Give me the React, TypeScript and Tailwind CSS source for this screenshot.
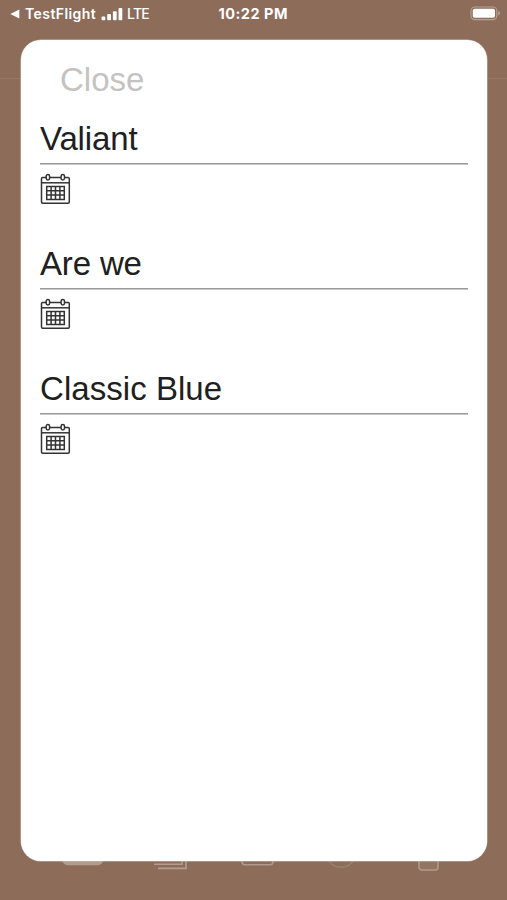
import React from 'react';

const entries = [
  { name: 'Valiant', tracking: 'tracking-[-0.15px]' },
  { name: 'Are we', tracking: 'tracking-[-0.15px]' },
  { name: 'Classic Blue', tracking: 'tracking-[0.05px]' },
];

function CalendarIcon() {
  return (
    <svg className="block h-8 w-8" viewBox="0 0 32 32" fill="none" stroke="#333333" strokeWidth="1.5">
      <rect x="1.5" y="4.4" width="27.8" height="25.9" rx="1.2" />
      <path d="M1.5 9.8H29.3" />
      <rect x="6.2" y="1.5" width="3.4" height="5.4" rx="1.7" fill="#fff" />
      <rect x="21.1" y="1.5" width="3.4" height="5.4" rx="1.7" fill="#fff" />
      <path d="M6.7 13.4H24.3V26.4H6.7ZM6.7 17.7H24.3M6.7 22.1H24.3M11.1 13.4V26.4M15.5 13.4V26.4M19.9 13.4V26.4" />
    </svg>
  );
}

function StatusBar() {
  return (
    <header className="flex h-7 items-center font-['Inter',sans-serif] text-white">
      <div className="flex w-[218.5px] items-center pl-[10px]">
        <svg className="h-[10px] w-[10px]" viewBox="0 0 10 10" fill="#fff">
          <path d="M0.3 5L9.3 0.6V9.4Z" />
        </svg>
        <span className="ml-[5px] w-[72px] whitespace-nowrap text-[14px] leading-5 font-semibold tracking-[0.42px]">TestFlight</span>
        <svg className="ml-[4px] h-[13px] w-[22px]" viewBox="0 0 22 13" fill="#fff">
          <rect x="0.5" y="8.4" width="3.8" height="3.8" rx="1" />
          <rect x="6.2" y="6.1" width="3.8" height="6.1" rx="1" />
          <rect x="11.9" y="3.2" width="3.8" height="9" rx="1" />
          <rect x="17.5" y="0" width="3.8" height="12.2" rx="1" />
        </svg>
        <span className="ml-[4px] text-[14px] leading-5 font-medium tracking-[-0.7px]">LTE</span>
      </div>
      <span className="whitespace-nowrap text-[14.5px] leading-5 font-bold tracking-[0.5px]">10:22 PM</span>
      <svg className="mr-[6px] ml-auto h-4 w-[31px]" viewBox="0 0 31 16" fill="none">
        <rect x="1" y="1" width="25.8" height="12.6" rx="3.8" stroke="#b8a294" strokeWidth="1.1" />
        <rect x="2.8" y="2.8" width="22.2" height="9" rx="1.8" fill="#fff" />
        <path d="M28.3 5.1V9.5Q30 9 30 7.3T28.3 5.1Z" fill="#b8a294" />
      </svg>
    </header>
  );
}

function TabBar() {
  return (
    <footer className="mt-auto flex h-[60px] items-start pl-[62px]">
      <svg className="h-8 w-[42px]" viewBox="0 0 42 32">
        <rect x="0.5" y="2" width="40.5" height="23.2" rx="5" fill="#b49c8f" />
      </svg>
      <svg className="ml-[49px] h-8 w-[36px]" viewBox="0 0 36 32" fill="none" stroke="#b49c8f" strokeWidth="1.6">
        <path d="M1 24.2H29V5M5 28.4H33V9" />
      </svg>
      <svg className="ml-[51px] h-8 w-[36px]" viewBox="0 0 36 32" fill="none" stroke="#b29a8c" strokeWidth="1.6">
        <rect x="2" y="3" width="31" height="21.8" rx="3" />
      </svg>
      <svg className="ml-[49px] h-8 w-[32px]" viewBox="0 0 32 32" fill="none" stroke="#9b7e6d" strokeWidth="1.4">
        <circle cx="16" cy="12.5" r="14.8" />
      </svg>
      <svg className="ml-[59px] h-8 w-[24px]" viewBox="0 0 24 32">
        <rect x="3" y="3" width="19" height="27" rx="3" fill="#947562" stroke="#b29a8c" strokeWidth="1.5" />
      </svg>
    </footer>
  );
}

export default function App() {
  return (
    <main className="relative h-[900px] w-[507px] overflow-hidden bg-[#8d6d59]">
      <div className="flex h-full flex-col">
        <StatusBar />
        <div className="mt-[50px] h-px bg-[#977866]" />
        <TabBar />
      </div>
      <section className="absolute top-[40px] left-[20.5px] h-[821px] w-[466.5px] rounded-[20px] bg-white pr-[19.5px] pl-[19.5px] font-['Liberation_Sans',Arial,sans-serif] text-[33px] ring-[0.5px] ring-[#cbbcb2]">
        <button className="ml-5 block pt-[21px] pb-px leading-[38px] text-[#c5c3c1]">Close</button>
        <ul className="pt-[9px]">
          {entries.map(({ name, tracking }) => (
            <li key={name} className="h-[125px] pt-[11px]">
              <h2 className={`h-[43px] leading-[38px] text-[#202020] ${tracking}`}>{name}</h2>
              <div className="h-[2px] border-t border-[#999999] bg-[#c8c8c8]" />
              <div className="pt-[8px]">
                <CalendarIcon />
              </div>
            </li>
          ))}
        </ul>
      </section>
    </main>
  );
}
